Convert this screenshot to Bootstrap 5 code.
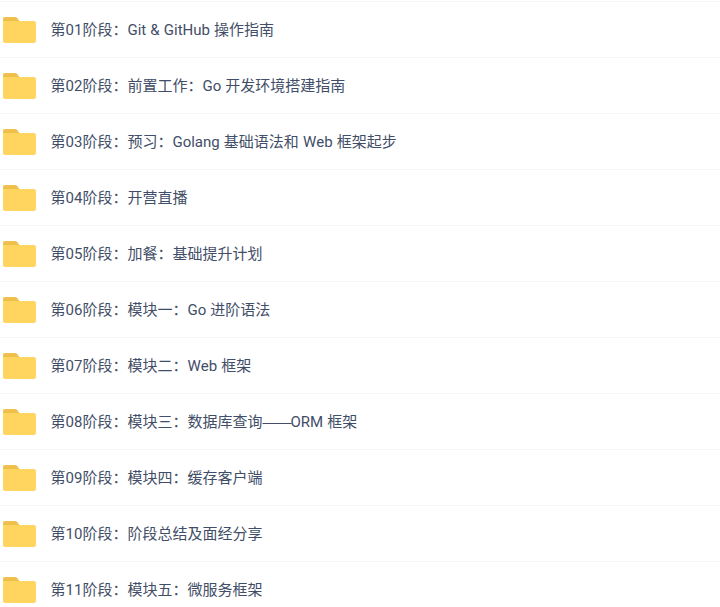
<!doctype html><html lang="zh"><head><meta charset="utf-8"><link href="https://cdn.jsdelivr.net/npm/bootstrap@5.3.0/dist/css/bootstrap.min.css" rel="stylesheet"><style>
html,body{overflow:hidden;height:607px}
body{font-family:Roboto,"Noto Sans CJK SC",sans-serif;background:#fff;color:#424e67}
.file-list{margin-top:1px}
.file-row{height:56px;border-top:1px solid #f5f6fa;padding-left:3px}
.folder-ico{width:33px;height:26px;flex:none;margin-top:1px}
.file-name{font-size:15px;margin-left:14.6px;line-height:20px;margin-top:1px;font-kerning:none;word-spacing:.4px}
.dash-run{font-family:"Liberation Sans",sans-serif;letter-spacing:-1px}
</style></head><body>
<div class="file-list" id="l"></div>
<script>
const n=["第01阶段：Git & GitHub 操作指南","第02阶段：前置工作：Go 开发环境搭建指南","第03阶段：预习：Golang 基础语法和 Web 框架起步","第04阶段：开营直播","第05阶段：加餐：基础提升计划","第06阶段：模块一：Go 进阶语法","第07阶段：模块二：Web 框架","第08阶段：模块三：数据库查询——ORM 框架","第09阶段：模块四：缓存客户端","第10阶段：阶段总结及面经分享","第11阶段：模块五：微服务框架"];
document.getElementById('l').innerHTML=n.map(t=>`<div class="file-row d-flex align-items-center"><svg class="folder-ico" viewBox="0 0 33 26"><path fill="#f0c04f" d="M0 2a2 2 0 0 1 2-2h10a3 3 0 0 1 2.2 1L17 5H0z"/><path fill="#ffd55f" d="M0 4h31a2 2 0 0 1 2 2v18a2 2 0 0 1-2 2H2a2 2 0 0 1-2-2z"/></svg><span class="file-name">${t.replace(/&/g,'&amp;').replace('——','<span class="dash-run">——</span>')}</span></div>`).join('');
</script>
<script src="https://cdn.jsdelivr.net/npm/bootstrap@5.3.0/dist/js/bootstrap.bundle.min.js"></script>
</body></html>
